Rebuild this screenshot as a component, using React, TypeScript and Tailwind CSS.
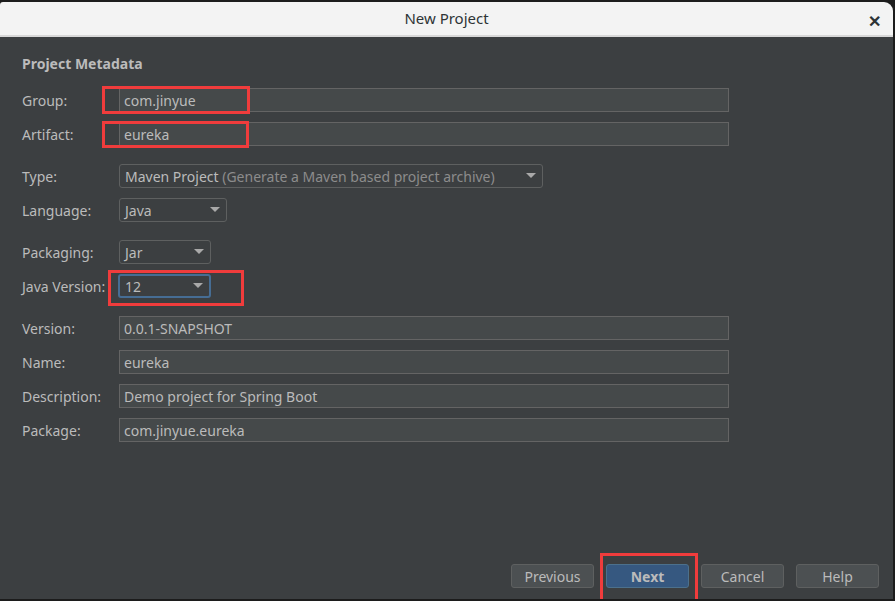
import { ReactNode } from 'react';

const font = { fontFamily: '"Noto Sans", "Open Sans", sans-serif' };

function Label({ children }: { children: ReactNode }) {
  return <span className="w-[97px] shrink-0 text-[14px] text-[#bbbbbb]">{children}</span>;
}

function TextRow({ label, value }: { label: string; value: string }) {
  return (
    <div className="flex h-6 items-center">
      <Label>{label}</Label>
      <div className="flex h-6 w-[610px] items-center border border-[#646464] bg-[#45494a] px-[4px] text-[14px] text-[#bbbbbb]">
        {value}
      </div>
    </div>
  );
}

function Arrow() {
  return (
    <svg width="10" height="6" viewBox="0 0 10 6" className="shrink-0">
      <path d="M0 0 L10 0 L5 5 Z" fill="#a9a9a9" />
    </svg>
  );
}

function SelectRow({
  label,
  width,
  focused,
  children,
}: {
  label: string;
  width: string;
  focused?: boolean;
  children: ReactNode;
}) {
  return (
    <div className="flex h-6 items-center">
      <Label>{label}</Label>
      <div
        className={`flex h-6 items-center justify-between rounded-[3px] bg-[#3c3f41] pl-[5px] pr-[6px] text-[14px] text-[#bbbbbb] ${width} ${
          focused ? 'border-2 border-[#466d94] -ml-px' : 'border border-[#5e6060]'
        }`}
      >
        <span className="whitespace-nowrap">{children}</span>
        <Arrow />
      </div>
    </div>
  );
}

function Btn({ children, primary }: { children: ReactNode; primary?: boolean }) {
  return (
    <button
      className={`flex h-[24px] w-[83px] items-center justify-center rounded-[3px] border text-[14px] ${
        primary
          ? 'border-[#4c708c] bg-[#365880] font-bold text-[#bbbbbb]'
          : 'border-[#5e6060] bg-[#4c5052] text-[#bbbbbb]'
      }`}
    >
      {children}
    </button>
  );
}

export default function App() {
  return (
    <div
      className="relative flex h-[601px] w-[895px] flex-col overflow-hidden border-b-2 border-r-2 border-[#1c1c1c] bg-[#1c1c1c]"
      style={font}
    >
      {/* title bar */}
      <div className="relative mt-[2px] flex h-[35px] shrink-0 items-center justify-center rounded-tl-[3px] rounded-tr-[9px] border-b-2 border-[#d8d8d8] bg-[#f3f3f3]">
        <span className="text-[15px] text-[#2e3436]">New Project</span>
        <span className="absolute right-[12px] top-[7px] text-[16px] font-bold text-[#2e3436]">✕</span>
      </div>

      {/* body */}
      <div className="flex flex-1 flex-col bg-[#3c3f41] px-[22px]">
        <div className="mt-[16px] text-[14px] font-bold text-[#bbbbbb]">Project Metadata</div>

        <div className="mt-[14px] flex flex-col gap-[10px]">
          <TextRow label="Group:" value="com.jinyue" />
          <TextRow label="Artifact:" value="eureka" />
        </div>

        <div className="mt-[18px] flex flex-col gap-[10px]">
          <SelectRow label="Type:" width="w-[424px]">
            Maven Project <span className="text-[#8c8c8c]">(Generate a Maven based project archive)</span>
          </SelectRow>
          <SelectRow label="Language:" width="w-[108px]">Java</SelectRow>
        </div>

        <div className="mt-[18px] flex flex-col gap-[10px]">
          <SelectRow label="Packaging:" width="w-[92px]">Jar</SelectRow>
          <SelectRow label="Java Version:" width="w-[93px]" focused>
            12
          </SelectRow>
        </div>

        <div className="mt-[18px] flex flex-col gap-[10px]">
          <TextRow label="Version:" value="0.0.1-SNAPSHOT" />
          <TextRow label="Name:" value="eureka" />
          <TextRow label="Description:" value="Demo project for Spring Boot" />
          <TextRow label="Package:" value="com.jinyue.eureka" />
        </div>

        <div className="-mr-[8px] mb-[11px] mt-auto flex justify-end gap-[12px]">
          <Btn>Previous</Btn>
          <Btn primary>Next</Btn>
          <Btn>Cancel</Btn>
          <Btn>Help</Btn>
        </div>
      </div>

      {/* annotation boxes */}
      <div className="pointer-events-none absolute left-[102px] top-[86px] h-[28px] w-[148px] border-[3px] border-[#f03c3c]" />
      <div className="pointer-events-none absolute left-[102px] top-[121px] h-[27px] w-[147px] border-[3px] border-[#f03c3c]" />
      <div className="pointer-events-none absolute left-[108px] top-[270px] h-[36px] w-[136px] border-[3px] border-[#f03c3c]" />
      <div className="pointer-events-none absolute left-[600px] top-[553px] h-[52px] w-[98px] border-[3px] border-[#f03c3c]" />
    </div>
  );
}
